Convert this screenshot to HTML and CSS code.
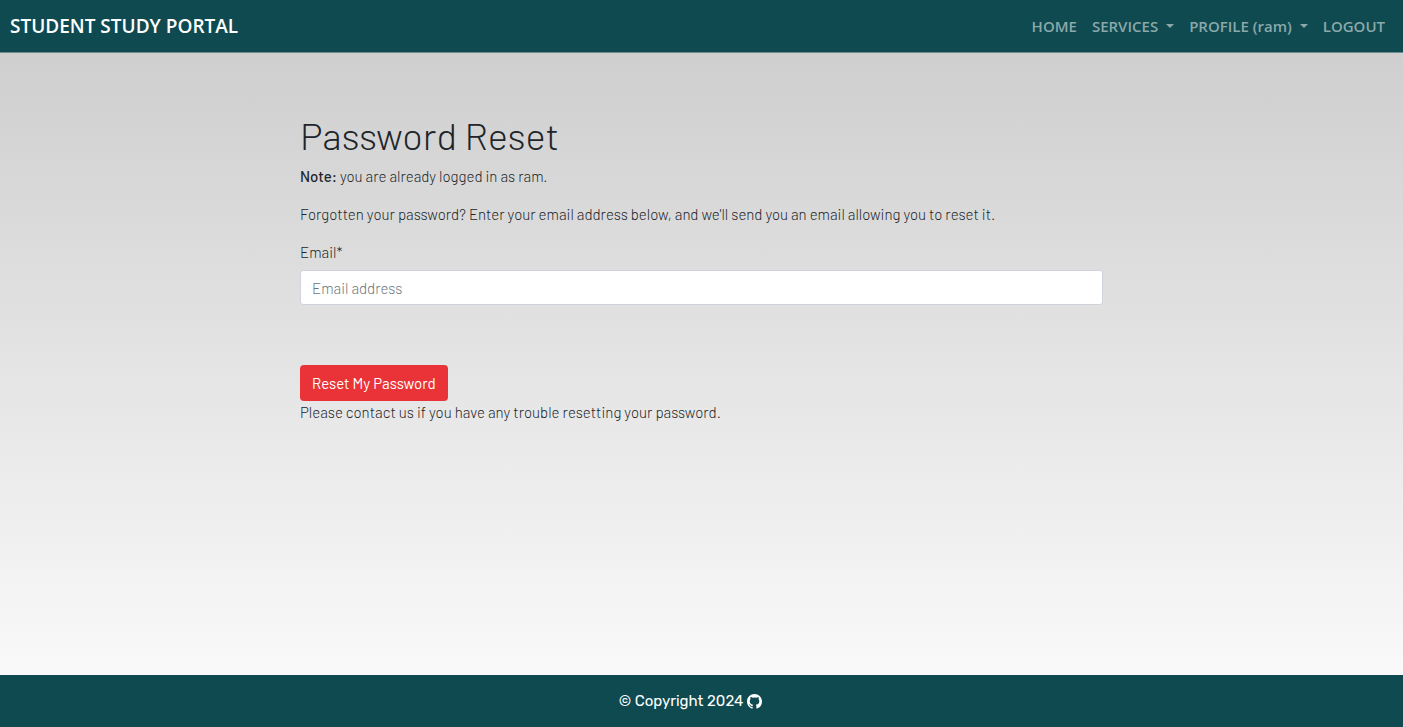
FILE: index.html
```
<!DOCTYPE html>
<html lang="en">
<head>
<meta charset="utf-8">
<meta name="viewport" content="width=device-width, initial-scale=1">
<title>Password Reset</title>
<link rel="stylesheet" href="styles.css">
</head>
<body>
<header class="navbar">
  <a class="brand" href="#">STUDENT STUDY PORTAL</a>
  <nav class="nav">
    <a class="nav-link" href="#">HOME</a>
    <a class="nav-link dropdown" href="#">SERVICES</a>
    <a class="nav-link dropdown" href="#">PROFILE (ram)</a>
    <a class="nav-link" href="#">LOGOUT</a>
  </nav>
</header>
<main class="content">
  <h1 class="title">Password Reset</h1>
  <p class="text"><strong class="note">Note:</strong> you are already logged in as ram.</p>
  <p class="text">Forgotten your password? Enter your email address below, and we'll send you an email allowing you to reset it.</p>
  <form class="form">
    <label class="label" for="email">Email*</label>
    <input class="input" id="email" type="email" placeholder="Email address">
    <button class="button" type="submit">Reset My Password</button>
  </form>
  <p class="text">Please contact us if you have any trouble resetting your password.</p>
</main>
<footer class="footer">
  <span>© Copyright 2024</span>
  <a class="github" href="#" aria-label="GitHub"><svg viewBox="0 0 16 16" width="15" height="15" fill="currentColor"><path d="M8 0C3.58 0 0 3.58 0 8c0 3.54 2.29 6.53 5.47 7.59.4.07.55-.17.55-.38 0-.19-.01-.82-.01-1.49-2.01.37-2.53-.49-2.69-.94-.09-.23-.48-.94-.82-1.13-.28-.15-.68-.52-.01-.53.63-.01 1.08.58 1.23.82.72 1.21 1.87.87 2.33.66.07-.52.28-.87.51-1.07-1.78-.2-3.64-.89-3.64-3.95 0-.87.31-1.59.82-2.15-.08-.2-.36-1.02.08-2.12 0 0 .67-.21 2.2.82a7.6 7.6 0 0 1 4 0c1.53-1.04 2.2-.82 2.2-.82.44 1.1.16 1.92.08 2.12.51.56.82 1.27.82 2.15 0 3.07-1.87 3.75-3.65 3.95.29.25.54.73.54 1.48 0 1.07-.01 1.93-.01 2.2 0 .21.15.46.55.38A8.01 8.01 0 0 0 16 8c0-4.42-3.58-8-8-8z"/></svg></a>
</footer>
</body>
</html>
```
FILE: styles.css
```
* { box-sizing: border-box; }
body {
  margin: 0;
  min-height: 100vh;
  display: flex;
  flex-direction: column;
  background: linear-gradient(#cbcbcb, #fdfdfd);
  color: #212529;
  font: 300 15px/23px Barlow, Roboto, sans-serif;
}
a { color: inherit; text-decoration: none; }
.navbar {
  display: flex;
  align-items: center;
  justify-content: space-between;
  height: 53px;
  padding: 0 18px 0 10px;
  border-bottom: 1px solid #6d8c8f;
  background: #0e4a50;
  font-family: "Open Sans", "Noto Sans", sans-serif;
}
.brand { color: #fff; font-size: 19px; font-weight: 600; }
.nav { display: flex; gap: 15px; color: #8ba8aa; font-size: 15px; font-weight: 600; }
.nav-link { display: flex; align-items: center; gap: 8px; }
.dropdown::after {
  content: "";
  border: 4px solid transparent;
  border-top-color: currentColor;
  border-bottom: 0;
}
.content { flex: 1; width: calc(100% - 32px); max-width: 803px; margin: 0 auto; padding-top: 58px; }
.title { margin: 0 0 6px; font-size: 38px; font-weight: 300; line-height: 48px; }
.text { margin: 0 0 15px; }
.note { font-weight: 500; }
.form { display: flex; flex-direction: column; align-items: flex-start; }
.label { margin-bottom: 7px; line-height: 22px; }
.input {
  width: 100%;
  height: 35px;
  margin-bottom: 60px;
  padding: 0 11px;
  border: 1px solid #ced4da;
  border-radius: 3px;
  background: #fff;
  font: inherit;
}
.input::placeholder { color: #6c757d; }
.button {
  height: 36px;
  padding: 0 12px;
  border: 0;
  border-radius: 4px;
  background: #e93338;
  color: #fff;
  font: inherit;
  font-weight: 400;
}
.footer {
  display: flex;
  align-items: center;
  justify-content: center;
  gap: 4px;
  height: 52px;
  padding-right: 22px;
  background: #0e4a50;
  color: #fff;
  font-family: Rubik, Roboto, sans-serif;
  font-weight: 400;
}
.github { display: flex; }
```
